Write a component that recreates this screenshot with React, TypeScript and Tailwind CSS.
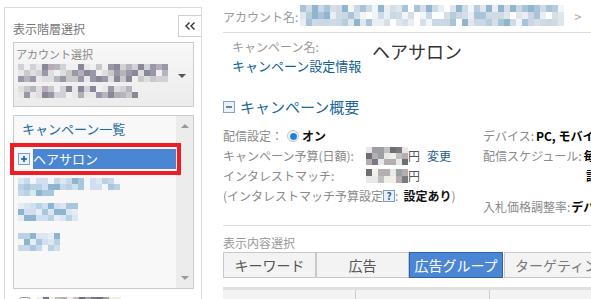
import React from 'react';

// pixelated stand-in for the blurred values in the screenshot
function Mosaic({ rows, palette, seed, cell = 'h-[6px] w-[6px]' }: { rows: number[]; palette: string[]; seed: number; cell?: string }) {
  return (
    <div className="flex flex-col">
      {rows.map((n, r) => (
        <div key={r} className="flex">
          {Array.from({ length: n }, (_, c) => {
            const v = Math.abs(Math.sin(seed * 12.9898 + r * 78.233 + c * 37.719) * 43758.5453) % 1;
            return <span key={c} className={`block ${cell}`} style={{ backgroundColor: palette[Math.floor(v * palette.length)] }} />;
          })}
        </div>
      ))}
    </div>
  );
}

const blueGray = ['#f2f5f8', '#dfe7ee', '#c9d8e4', '#b6cddc', '#a7c4d8', '#e8eef3', '#d5dfe7', '#8fb5cf', '#ffffff', '#cfdbe4'];
const grayPurple = ['#c9c9c9', '#dedede', '#b5b5bd', '#9a98a8', '#e8e8e8', '#d2d2d6', '#8a8898', '#f0f0f0', '#b8acb8'];
const lightBlue = ['#c8d8ec', '#dbe6f0', '#a9c7dc', '#e6eef5', '#b8d2e4', '#f2f6f9', '#8cb6cf', '#d0def0'];
const darkGray = ['#e8e8e8', '#c0c0c0', '#9ca0a4', '#7a7a80', '#b5aeb0', '#f2efe8', '#6e6e76', '#d0d0d4'];

function Triangle({ dir }: { dir: 'up' | 'down' }) {
  return dir === 'up' ? (
    <span className="block h-0 w-0 border-x-[4px] border-b-[4px] border-x-transparent border-b-[#999]" />
  ) : (
    <span className="block h-0 w-0 border-x-[4px] border-t-[4px] border-x-transparent border-t-[#999]" />
  );
}

function LeftPanel() {
  return (
    <div className="relative ml-[4px] mt-[7px] w-[198px] shrink-0 border-x border-t border-[#dcdcdc] bg-white">
      <button className="absolute right-0 top-[7px] flex h-[22px] w-[23px] items-center justify-center border-y border-l border-[#cfcfcf] bg-white">
        <svg width="11" height="8" viewBox="0 0 11 8" fill="none" stroke="#333" strokeWidth="1.4">
          <polyline points="4.5,0.5 1,4 4.5,7.5" />
          <polyline points="9.5,0.5 6,4 9.5,7.5" />
        </svg>
      </button>

      <div className="h-[34px] pl-[8px] pt-[13px] text-[12px] leading-[16px] text-[#777]">表示階層選択</div>

      <div className="relative ml-[8px] h-[65px] w-[181px] border border-[#cccccc] bg-linear-to-b from-[#f8f8f8] to-[#ececec]">
        <div className="pl-[2px] pt-[4px] text-[11px] leading-[14px] text-[#888]">アカウント選択</div>
        <div className="ml-[4px] mt-[3px]">
          <Mosaic rows={[25, 25, 25]} palette={grayPurple} seed={3} />
          <div className="mt-[4px]">
            <Mosaic rows={[20, 20]} palette={grayPurple} seed={7} />
          </div>
        </div>
        <span className="absolute right-[7px] top-[31px] block h-0 w-0 border-x-[4px] border-t-[4px] border-x-transparent border-t-[#555]" />
      </div>

      <div className="ml-[8px] mt-[8px] flex h-[174px] w-[181px] border border-[#cccccc] bg-[#f8f8f8]">
        <div className="flex-1">
          <div className="h-[28px] border-b border-[#e4e4e4] pl-[8px] pt-[4px] text-[13px] leading-[18px] text-[#1d6aa0]">キャンペーン一覧</div>
          <div className="mt-[5px] flex h-[20px] items-center pl-[4px]">
            <svg width="12" height="12" viewBox="0 0 12 12">
              <rect x="0.5" y="0.5" width="11" height="11" fill="#e9f1fb" stroke="#7d9fca" />
              <path d="M6 3v6M3 6h6" stroke="#1f5a95" strokeWidth="1.6" />
            </svg>
            <div className="ml-[3px] h-full flex-1 bg-[#4a86d4] text-[13px] leading-[20px] text-white">ヘアサロン</div>
          </div>
          <div className="ml-[4px] mt-[9px]">
            <Mosaic rows={[17, 17, 6]} palette={lightBlue} seed={11} />
          </div>
          <div className="ml-[4px] mt-[7px]">
            <Mosaic rows={[10, 10, 10]} palette={lightBlue} seed={17} />
          </div>
          <div className="ml-[4px] mt-[12px]">
            <Mosaic rows={[7, 7, 7]} palette={lightBlue} seed={23} />
          </div>
        </div>
        <div className="flex w-[17px] flex-col items-center justify-between bg-[#ececec] py-[8px]">
          <Triangle dir="up" />
          <Triangle dir="down" />
        </div>
      </div>

      <div className="ml-[14px] mt-[8px] flex items-center gap-[6px]">
        <span className="block h-[12px] w-[12px] rounded-[3px] border border-[#999] bg-white" />
        <Mosaic rows={[14, 14]} palette={darkGray} seed={31} />
      </div>
    </div>
  );
}

function Row({ children, className = '' }: { children: React.ReactNode; className?: string }) {
  return <div className={`flex h-[20px] items-center text-[12px] leading-[20px] text-[#8a8a8a] ${className}`}>{children}</div>;
}

export default function App() {
  return (
    <div className="relative flex h-[299px] w-[591px] overflow-hidden bg-white font-['Noto_Sans_CJK_JP','Noto_Sans',sans-serif]">
      <LeftPanel />

      <div className="min-w-0 flex-1 overflow-hidden whitespace-nowrap pl-[21px]">
        {/* account */}
        <div className="flex h-[33px] items-start border-b border-[#dddddd]">
          <span className="mt-[9px] shrink-0 pr-[2px] text-[12px] leading-[16px] text-[#999]">アカウント名:</span>
          <div className="mt-[5px] shrink-0">
            <Mosaic rows={[44, 44, 44]} palette={blueGray} seed={5} cell="h-[7px] w-[6px]" />
          </div>
          <span className="ml-[10px] mt-[9px] text-[13px] leading-[16px] text-[#b9a58a]">&gt;</span>
        </div>

        {/* campaign name */}
        <div className="ml-[9px] mt-[4px] flex">
          <div className="w-[140px] leading-[19px]">
            <div className="text-[12px] text-[#999]">キャンペーン名:</div>
            <div className="text-[13px] text-[#0f5f96]">キャンペーン設定情報</div>
          </div>
          <div className="mt-[3px] text-[18px] leading-[22px] text-[#333]">ヘアサロン</div>
        </div>

        {/* summary */}
        <div className="mt-[22px] flex items-center gap-[5px]">
          <svg width="12" height="12" viewBox="0 0 12 12">
            <rect x="0.5" y="0.5" width="11" height="11" fill="#eef2f7" stroke="#8aa2c0" />
            <path d="M3 6h6" stroke="#1f5a95" strokeWidth="1.4" />
          </svg>
          <span className="text-[15px] leading-[20px] text-[#1e6aa0]">キャンペーン概要</span>
        </div>

        <div className="mt-[9px] flex">
          <div className="w-[260px] shrink-0">
            <Row>
              <span>配信設定：</span>
              <span className="ml-[4px] flex h-[12px] w-[12px] items-center justify-center rounded-full border border-[#c4c4c4] bg-[#f4f4f4]">
                <span className="block h-[7px] w-[7px] rounded-full bg-[#1b7fe0] shadow-[inset_0_0_1px_#9fd0ff]" />
              </span>
              <span className="ml-[3px] font-bold text-[#111]">オン</span>
            </Row>
            <Row>
              <span className="w-[143px]">キャンペーン予算(日額):</span>
              <Mosaic rows={[7, 7, 7]} palette={darkGray} seed={41} cell="h-[6px] w-[6px]" />
              <span className="text-[#555]">円</span>
              <span className="ml-[7px] text-[#1a5d8f]">変更</span>
            </Row>
            <Row>
              <span className="w-[143px]">インタレストマッチ:</span>
              <Mosaic rows={[7, 7]} palette={darkGray} seed={43} cell="h-[7px] w-[6px]" />
              <span className="text-[#555]">円</span>
            </Row>
            <Row>
              <span>(インタレストマッチ予算設定</span>
              <span className="flex h-[12px] w-[12px] items-center justify-center border border-[#7f9fc8] bg-[#e8f0fa] text-[10px] font-bold leading-none text-[#2b5fa0]">?</span>
              <span>:</span>
              <span className="ml-[5px] font-bold text-[#111]">設定あり</span>
              <span>)</span>
            </Row>
          </div>
          <div className="min-w-0">
            <Row>
              <span>デバイス:</span>
              <span className="ml-[2px] font-bold text-[#000]">PC, モバイル</span>
            </Row>
            <Row>
              <span>配信スケジュール:</span>
              <span className="ml-[2px] font-bold text-[#000]">毎日</span>
            </Row>
            <Row className="pl-[103px]">
              <span className="font-bold text-[#000]">設定</span>
            </Row>
            <Row className="mt-[11px]">
              <span>入札価格調整率:</span>
              <span className="ml-[1px] font-bold text-[#000]">デバイス</span>
            </Row>
          </div>
        </div>

        <div className="mt-[8px] border-t border-[#dddddd]" />

        <div className="mt-[9px] text-[12px] leading-[16px] text-[#999]">表示内容選択</div>

        <div className="mt-[1px] flex h-[26px]">
          <div className="flex w-[93px] shrink-0 items-center justify-center border border-[#c8c8c8] bg-[#f3f3f3] text-[14px] text-[#555]">キーワード</div>
          <div className="flex w-[93px] shrink-0 items-center justify-center border border-[#c8c8c8] bg-[#f3f3f3] text-[14px] text-[#555]">広告</div>
          <div className="flex w-[94px] shrink-0 items-center justify-center border border-[#2b62a8] bg-[#4a86d4] text-[14px] text-white">広告グループ</div>
          <div className="ml-[1px] flex w-[130px] shrink-0 items-center border border-[#c8c8c8] bg-[#f3f3f3] pl-[10px] text-[14px] text-[#777]">ターゲティング</div>
        </div>

        <div className="mt-[9px] flex h-[14px] border-t-[3px] border-[#e0e0e0] bg-[#f3f3f3]">
          <div className="w-[133px] shrink-0 border-r border-[#cccccc]" />
          <div className="w-[134px] shrink-0 border-r border-[#cccccc]" />
        </div>
      </div>

      {/* red highlight annotation */}
      <div className="pointer-events-none absolute left-[10px] top-[143px] h-[32px] w-[171px] border-[4px] border-[#ee1c24]" />
    </div>
  );
}
